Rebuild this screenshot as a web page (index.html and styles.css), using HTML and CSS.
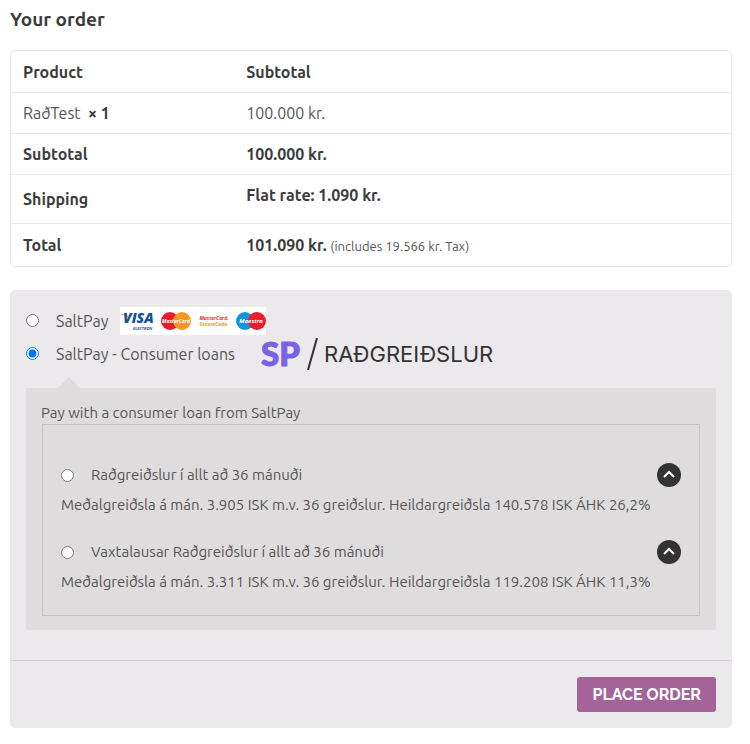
FILE: index.html
```html
<!DOCTYPE html>
<html lang="en">
<head>
    <meta charset="UTF-8">
    <meta name="viewport" content="width=device-width, initial-scale=1.0">
    <title>Your order</title>
    <link rel="stylesheet" href="styles.css">
</head>
<body>
    <form class="order">
        <h3>Your order</h3>

        <table class="order-table">
            <thead>
                <tr><th>Product</th><th>Subtotal</th></tr>
            </thead>
            <tbody>
                <tr><td>RaðTest &nbsp;<strong>× 1</strong></td><td>100.000 kr.</td></tr>
            </tbody>
            <tfoot>
                <tr><th>Subtotal</th><td><strong>100.000 kr.</strong></td></tr>
                <tr class="shipping"><th>Shipping</th><td><strong>Flat rate: 1.090 kr.</strong></td></tr>
                <tr class="total"><th>Total</th><td><strong>101.090 kr.</strong> <small>(includes 19.566 kr. Tax)</small></td></tr>
            </tfoot>
        </table>

        <div class="payment">
            <div class="methods">
                <div class="method">
                    <input type="radio" name="payment" id="saltpay">
                    <label for="saltpay">SaltPay</label>
                    <svg class="cards" width="146" height="28" viewBox="0 0 146 28" role="img" aria-label="Accepted cards">
                        <rect width="146" height="28" fill="#fff"/>
                        <path d="M1 7h6l2 6c-1-3-4-5-8-5z" fill="#f2a01c"/>
                        <text class="card-visa" x="3" y="16" fill="#17509b">VISA</text>
                        <text class="card-small" x="13" y="23" fill="#17509b">ELECTRON</text>
                        <circle cx="50" cy="14" r="9" fill="#e81c2b"/>
                        <circle cx="62" cy="14" r="9" fill="#f6981d"/>
                        <text class="card-name" x="56" y="16" fill="#fff">MasterCard</text>
                        <text class="card-name" x="94" y="13" fill="#e8322b">MasterCard.</text>
                        <text class="card-name" x="94" y="19" fill="#f6981d">SecureCode.</text>
                        <circle cx="125" cy="14" r="9" fill="#1495d8"/>
                        <circle cx="137" cy="14" r="9" fill="#ed1c2b"/>
                        <text class="card-maestro" x="131" y="16" fill="#fff">Maestro</text>
                    </svg>
                </div>
                <div class="method">
                    <input type="radio" name="payment" id="loans" checked>
                    <label for="loans">SaltPay - Consumer loans</label>
                    <svg class="loan-logo" width="236" height="44" viewBox="0 0 236 44" role="img" aria-label="SP Raðgreiðslur">
                        <text class="logo-sp" x="2" y="34">SP</text>
                        <path d="M58 6 49 38" stroke="#333" stroke-width="2"/>
                        <text class="logo-name" x="65" y="30">RAÐGREIÐSLUR</text>
                    </svg>
                </div>

                <div class="loan-box">
                    <p>Pay with a consumer loan from SaltPay</p>
                    <div class="loans">
                        <div class="loan">
                            <div class="loan-head">
                                <input type="radio" name="loan" id="loan1">
                                <label for="loan1">Raðgreiðslur í allt að 36 mánuði</label>
                                <button type="button" class="toggle" aria-label="Show details">
                                    <svg width="24" height="24" viewBox="0 0 24 24"><path d="m7 14 5-5 5 5"/></svg>
                                </button>
                            </div>
                            <p>Meðalgreiðsla á mán. 3.905 ISK m.v. 36 greiðslur. Heildargreiðsla 140.578 ISK ÁHK 26,2%</p>
                        </div>
                        <div class="loan">
                            <div class="loan-head">
                                <input type="radio" name="loan" id="loan2">
                                <label for="loan2">Vaxtalausar Raðgreiðslur í allt að 36 mánuði</label>
                                <button type="button" class="toggle" aria-label="Show details">
                                    <svg width="24" height="24" viewBox="0 0 24 24"><path d="m7 14 5-5 5 5"/></svg>
                                </button>
                            </div>
                            <p>Meðalgreiðsla á mán. 3.311 ISK m.v. 36 greiðslur. Heildargreiðsla 119.208 ISK ÁHK 11,3%</p>
                        </div>
                    </div>
                </div>
            </div>
            <div class="place-order">
                <button type="submit" class="submit">PLACE ORDER</button>
            </div>
        </div>
    </form>
</body>
</html>
```
FILE: styles.css
```css
* {
    box-sizing: border-box;
}
body {
    margin: 0;
    padding: 7px 18px 16px 10px;
    background: white;
    color: #555;
    font-family: Ubuntu, "Noto Sans", sans-serif;
    font-size: 16px;
    line-height: 24px;
}
h3 {
    margin: 0 0 19px;
    color: #3c3c3c;
    font-size: 19px;
    font-weight: 600;
    line-height: 24px;
}
p {
    margin: 0;
}
input[type="radio"] {
    width: 13px;
    height: 13px;
    margin: 0;
}
.order-table {
    width: 100%;
    border: 1px solid #e8e8e8;
    border-radius: 5px;
    border-spacing: 0;
    table-layout: fixed;
}
.order-table th, .order-table td {
    height: 41px;
    padding: 8px 12px;
    border-bottom: 1px solid #e8e8e8;
    text-align: left;
    vertical-align: middle;
}
.order-table th:first-child, .order-table td:first-child {
    width: 31%;
}
.order-table thead th {
    height: 42px;
}
.order-table th, .order-table strong {
    color: #3c3c3c;
    font-weight: 600;
}
.order-table .shipping th, .order-table .shipping td {
    height: 49px;
}
.order-table .shipping td {
    padding-bottom: 16px;
}
.order-table .total th, .order-table .total td {
    height: 42px;
    border-bottom: none;
}
.order-table small {
    font-size: 13px;
}
.payment {
    margin-top: 23px;
    border-radius: 5px;
    background: #ebe9eb;
}
.methods {
    padding: 14px 16px 30px;
    border-bottom: 1px solid #d3d0d4;
}
.method {
    display: flex;
    align-items: center;
    height: 33px;
}
.method input {
    margin-right: 17px;
}
.cards {
    margin-left: 12px;
}
.card-visa, .card-small, .card-name, .card-maestro {
    font-family: "Open Sans", sans-serif;
    font-style: italic;
    font-weight: 700;
}
.card-visa {
    font-size: 14px;
    font-weight: 800;
}
.card-small {
    font-size: 4px;
}
.card-name {
    font-size: 5px;
    text-anchor: middle;
}
.card-maestro {
    font-size: 6px;
    text-anchor: middle;
}
.loan-logo {
    margin-left: 24px;
    overflow: visible;
}
.logo-sp {
    fill: #7b61e4;
    stroke: #7b61e4;
    font-family: Lato, sans-serif;
    font-size: 33px;
    font-weight: 900;
}
.logo-name {
    fill: #333;
    font-family: Inter, sans-serif;
    font-size: 22px;
}
.loan-box {
    position: relative;
    margin-top: 18px;
    padding: 14px 15px;
    border-radius: 2px;
    background: #dfdcdd;
}
.loan-box::before {
    content: "";
    position: absolute;
    top: -11px;
    left: 32px;
    border: 11px solid transparent;
    border-top: none;
    border-bottom-color: #dfdcdd;
}
.loan-box p {
    font-size: 15px;
    line-height: 22px;
}
.loans {
    margin: 0 1px;
    padding: 35px 18px 22px;
    border: 1px solid #c5c2c4;
}
.loan + .loan {
    margin-top: 21px;
}
.loan-head {
    display: flex;
    align-items: center;
    height: 30px;
    margin-bottom: 4px;
}
.loan-head label {
    margin-left: 17px;
    font-size: 15px;
}
.toggle {
    width: 24px;
    height: 24px;
    margin-left: auto;
    padding: 0;
    border: none;
    border-radius: 50%;
    background: #333;
    cursor: pointer;
}
.toggle svg {
    display: block;
}
.toggle path {
    fill: none;
    stroke: white;
    stroke-width: 2;
}
.place-order {
    display: flex;
    justify-content: flex-end;
    padding: 16px;
}
.submit {
    height: 35px;
    padding: 0 15px;
    border: none;
    border-radius: 3px;
    background: #a46497;
    color: white;
    font-family: Raleway, Lato, sans-serif;
    font-size: 16px;
    font-weight: 700;
    cursor: pointer;
}
.submit:hover {
    background: #935386;
}
```
